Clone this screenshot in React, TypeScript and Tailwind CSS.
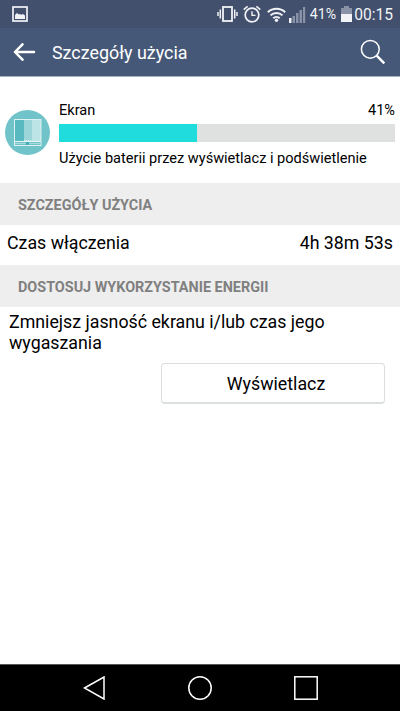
const BATTERY_PERCENT = 41;

export default function App() {
  return (
    <div className="flex h-screen w-full flex-col overflow-hidden bg-white font-['Roboto',sans-serif] text-black">
      <StatusBar />
      <Header title="Szczegóły użycia" />

      <main className="flex-1">
        <UsageSummary />

        <SectionTitle>Szczegóły użycia</SectionTitle>
        <div className="flex h-10 items-center justify-between pr-[7px] pb-[4px] pl-[7px] text-[17.8px]">
          <span>Czas włączenia</span>
          <span>4h 38m 53s</span>
        </div>

        <SectionTitle>Dostosuj wykorzystanie energii</SectionTitle>
        <p className="pt-[4px] pr-12 pl-[9px] text-[17.8px] leading-[21px]">
          Zmniejsz jasność ekranu i/lub czas jego wygaszania
        </p>
        <div className="flex justify-end pt-[10px] pr-[15px]">
          <button className="h-[41px] w-[224px] rounded-[4px] border border-b-2 border-[#dcdfdf] bg-white pt-[2px] pl-[6px] text-[17.8px]">
            Wyświetlacz
          </button>
        </div>
      </main>

      <NavBar />
    </div>
  );
}

function StatusBar() {
  return (
    <div className="flex h-7 shrink-0 items-center bg-[#424f6d] pr-[7px] pl-3 text-[#f1f3f6]">
      <svg width="16" height="16" viewBox="0 0 16 16" fill="none">
        <rect x="1" y="1" width="14" height="14" stroke="currentColor" strokeWidth="1.7" />
        <path d="M3 13V9l2-2 2 1.5L8 8l1.4.8L11 8l2 1.5V13z" fill="currentColor" />
      </svg>

      <svg className="ml-auto" width="22" height="16" viewBox="0 0 22 16" fill="none" stroke="currentColor">
        <rect x="6" y="1" width="9" height="14" strokeWidth="1.8" />
        <path d="M3.3 3.5v9M1 6v4M17.7 3.5v9M20 6v4" strokeWidth="1.5" />
      </svg>
      <svg className="ml-[4px]" width="18" height="18" viewBox="0 0 18 18" fill="none" stroke="currentColor">
        <circle cx="9" cy="10" r="6.8" strokeWidth="1.7" />
        <path d="M9 6.2V10.4h3.5" strokeWidth="1.4" />
        <path d="M.7 4.6L4.6 1.3M17.3 4.6l-3.9-3.3" strokeWidth="1.6" />
      </svg>
      <svg className="ml-[6px]" width="19" height="15" viewBox="0 0 19 15" fill="none" stroke="currentColor">
        <path d="M.8 5.3a12.6 12.6 0 0 1 17.4 0M3.5 8.4a8.7 8.7 0 0 1 12 0M6.3 11.2a4.7 4.7 0 0 1 6.4 0" strokeWidth="2" />
        <circle cx="9.5" cy="13.2" r="1.7" fill="currentColor" stroke="none" />
      </svg>
      <svg className="ml-[3px]" width="17" height="17" viewBox="0 0 17 17">
        <path d="M0 12h2.5v5H0z" fill="currentColor" />
        <path d="M3.5 10H6v7H3.5zM7 7h2.5v10H7zM10.5 4H13v13h-2.5zM14 1h2.2v16H14z" fill="#8992a7" />
      </svg>
      <span className="ml-[4px] pt-px text-[14.2px] leading-none">{BATTERY_PERCENT}%</span>
      <svg className="ml-[5px]" width="11" height="16" viewBox="0 0 11 16">
        <path d="M3 0h5v2h3v6H0V2h3z" fill="#8992a7" />
        <path d="M0 8h11v8H0z" fill="currentColor" />
      </svg>
      <span className="ml-[2px] pt-[3px] text-[15.6px] leading-none">00:15</span>
    </div>
  );
}

function Header({ title }: { title: string }) {
  return (
    <header className="flex h-[49px] shrink-0 items-center border-b border-[#a9b3c6] bg-[#465878] pr-[14px] pl-[13px] text-white">
      <button aria-label="Wstecz">
        <svg width="23" height="18" viewBox="0 0 23 18" fill="none" stroke="currentColor" strokeWidth="2.5">
          <path d="M21 9H2M9.5 1.3L2 9l7.5 7.7" strokeLinecap="round" strokeLinejoin="round" />
        </svg>
      </button>
      <h1 className="ml-4 pt-[2px] text-[17.9px] leading-6">{title}</h1>
      <button aria-label="Szukaj" className="ml-auto">
        <svg width="26" height="26" viewBox="0 0 26 26" fill="none" stroke="currentColor">
          <circle cx="10.3" cy="10.3" r="8.9" strokeWidth="1.5" />
          <path d="M16.7 16.7l7.6 7.6" strokeWidth="2.4" />
        </svg>
      </button>
    </header>
  );
}

function UsageSummary() {
  return (
    <div className="flex h-[106px] pt-[25px] pr-[5px] pl-[5px]">
      <ScreenIcon />
      <div className="ml-[9px] flex-1 text-[14.56px] leading-4">
        <div className="flex justify-between">
          <span>Ekran</span>
          <span>{BATTERY_PERCENT}%</span>
        </div>
        <div className="mt-[6px] h-[18px] bg-[#dfe1e0]">
          <div className="h-full bg-[#20dcdc]" style={{ width: `${BATTERY_PERCENT}%` }} />
        </div>
        <div className="mt-[8px] whitespace-nowrap">Użycie baterii przez wyświetlacz i podświetlenie</div>
      </div>
    </div>
  );
}

function ScreenIcon() {
  return (
    <svg className="mt-[8px] shrink-0" width="45" height="45" viewBox="0 0 45 45">
      <circle cx="22.5" cy="22.5" r="22.5" fill="#6fc3c9" />
      <path d="M10 10h9v21h-9z" fill="#59b9c0" />
      <path d="M19 10h8v21h-8z" fill="#9bd5d9" />
      <path d="M27 10h9v21h-9z" fill="#bce3e5" />
      <rect x="9.5" y="9.5" width="26.5" height="26" fill="none" stroke="#dcf1f2" />
      <path d="M10 31.5h26" stroke="#e4f5f6" />
      <path d="M10 33.5h26" stroke="#a5dade" />
      <path d="M19 30.5h7" stroke="#e4f5f6" strokeDasharray="1 1" />
      <circle cx="22.5" cy="33.5" r="1.6" fill="#3fa9b1" />
    </svg>
  );
}

function SectionTitle({ children }: { children: string }) {
  return (
    <h2 className="flex h-[42px] items-center bg-[#eeeeee] pt-[3px] pl-[18px] text-[14.4px] font-bold text-[#808080] uppercase">
      {children}
    </h2>
  );
}

function NavBar() {
  return (
    <nav className="flex h-[47px] shrink-0 items-center justify-between border-t border-[#555555] bg-black pr-[82px] pl-[83px] text-white">
      <svg width="23" height="24" viewBox="0 0 23 24" fill="none" stroke="currentColor" strokeWidth="1.5">
        <path d="M1.5 12L21 1v22z" />
      </svg>
      <svg width="24" height="24" viewBox="0 0 24 24" fill="none" stroke="currentColor" strokeWidth="1.5">
        <circle cx="12" cy="12" r="11.2" />
      </svg>
      <svg width="24" height="24" viewBox="0 0 24 24" fill="none" stroke="currentColor" strokeWidth="1.5">
        <rect x=".8" y=".8" width="22.4" height="22.4" />
      </svg>
    </nav>
  );
}
